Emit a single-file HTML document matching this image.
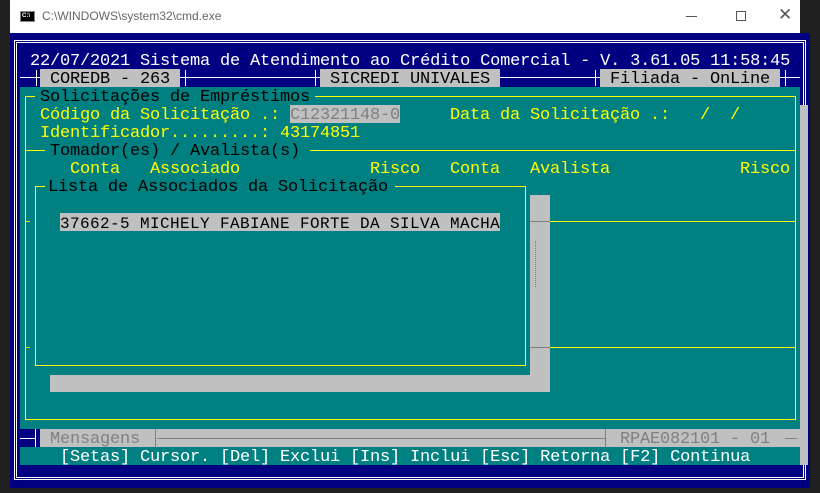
<!DOCTYPE html>
<html><head><meta charset="utf-8"><style>
*{margin:0;padding:0;box-sizing:border-box}
body{width:820px;height:493px;background:#202020;position:relative;overflow:hidden;font-family:"Liberation Mono",monospace}
.a{position:absolute}
.t{position:absolute;font-size:17px;letter-spacing:-0.2px;line-height:18px;height:18px;white-space:pre;padding-top:2px}
.y{color:#ffff00}.k{color:#000}.w{color:#fff}.g{color:#808080}
</style></head><body>
<!-- title bar -->
<div class="a" style="left:10px;top:0;width:790px;height:33px;background:#fff"></div>
<div class="a" style="left:20px;top:11px;width:15px;height:11px;background:#000;border:1px solid #888"></div>
<div class="a" style="left:22px;top:13px;font:bold 6px 'Liberation Sans';color:#fff">C:\</div>
<div class="a" style="left:42px;top:9px;font:12px 'Liberation Sans',sans-serif;color:#666">C:\WINDOWS\system32\cmd.exe</div>
<div class="a" style="left:686px;top:16px;width:11px;height:1px;background:#555"></div>
<div class="a" style="left:736px;top:11px;width:10px;height:10px;border:1px solid #555"></div>
<div class="a" style="left:778px;top:5px;font:17px 'Liberation Sans';color:#555">✕</div>
<!-- console -->
<div class="a" style="left:10px;top:33px;width:800px;height:455px;background:#000080"></div>
<div class="a" style="left:14px;top:40px;width:792px;height:440px;border:1px solid #fff"></div>
<div class="a" style="left:16px;top:42px;width:788px;height:436px;border:1px solid #fff"></div>
<div class="t w" style="left:30px;top:51px">22/07/2021 Sistema de Atendimento ao Crédito Comercial - V. 3.61.05 11:58:45</div>
<!-- row 2 -->
<div class="a" style="left:20px;top:77px;width:780px;height:1px;background:#fff"></div>
<div class="a" style="left:36px;top:70px;width:1px;height:16px;background:#fff"></div>
<div class="a" style="left:40px;top:69px;width:140px;height:18px;background:#c0c0c0"></div>
<div class="t k" style="left:50px;top:69px">COREDB - 263</div>
<div class="a" style="left:185px;top:70px;width:1px;height:16px;background:#fff"></div>
<div class="a" style="left:315px;top:70px;width:1px;height:16px;background:#fff"></div>
<div class="a" style="left:320px;top:69px;width:180px;height:18px;background:#c0c0c0"></div>
<div class="t k" style="left:330px;top:69px">SICREDI UNIVALES</div>
<div class="a" style="left:595px;top:70px;width:1px;height:16px;background:#fff"></div>
<div class="a" style="left:600px;top:69px;width:180px;height:18px;background:#c0c0c0"></div>
<div class="t k" style="left:610px;top:69px">Filiada - OnLine</div>
<div class="a" style="left:785px;top:70px;width:1px;height:16px;background:#fff"></div>
<!-- teal -->
<div class="a" style="left:20px;top:87px;width:780px;height:342px;background:#008080"></div>
<div class="a" style="left:800px;top:105px;width:8px;height:360px;background:#c0c0c0"></div>
<div class="a" style="left:25px;top:96px;width:771px;height:324px;border:1px solid #ffff00"></div>
<div class="a" style="left:35px;top:88px;width:280px;height:16px;background:#008080"></div>
<div class="t k" style="left:40px;top:87px">Solicitações de Empréstimos</div>
<div class="t y" style="left:40px;top:105px">Código da Solicitação .:</div>
<div class="a" style="left:290px;top:105px;width:110px;height:18px;background:#c0c0c0"></div>
<div class="t g" style="left:290px;top:105px">C12321148-0</div>
<div class="t y" style="left:450px;top:105px">Data da Solicitação .:   /  /</div>
<div class="t y" style="left:40px;top:123px">Identificador.........: 43174851</div>
<div class="a" style="left:25px;top:150px;width:771px;height:1px;background:#ffff00"></div>
<div class="a" style="left:45px;top:142px;width:265px;height:16px;background:#008080"></div>
<div class="t k" style="left:50px;top:141px">Tomador(es) / Avalista(s)</div>
<div class="t y" style="left:70px;top:159px">Conta</div>
<div class="t y" style="left:150px;top:159px">Associado</div>
<div class="t y" style="left:370px;top:159px">Risco</div>
<div class="t y" style="left:450px;top:159px">Conta</div>
<div class="t y" style="left:530px;top:159px">Avalista</div>
<div class="t y" style="left:740px;top:159px">Risco</div>
<!-- inner list -->
<div class="a" style="left:35px;top:186px;width:491px;height:180px;border:1px solid #ffff00"></div>
<div class="a" style="left:45px;top:178px;width:350px;height:16px;background:#008080"></div>
<div class="t k" style="left:48px;top:177px">Lista de Associados da Solicitação</div>
<div class="a" style="left:26px;top:221px;width:4px;height:1px;background:#ffff00"></div>
<div class="a" style="left:26px;top:347px;width:4px;height:1px;background:#ffff00"></div>
<div class="a" style="left:60px;top:213px;width:440px;height:18px;background:#c0c0c0"></div>
<div class="t k" style="left:60px;top:213px;font-size:16px;letter-spacing:0.4px">37662-5 MICHELY FABIANE FORTE DA SILVA MACHA</div>
<div class="a" style="left:530px;top:195px;width:20px;height:197px;background:#c0c0c0"></div>
<div class="a" style="left:50px;top:375px;width:500px;height:17px;background:#c0c0c0"></div>
<div class="a" style="left:530px;top:221px;width:20px;height:1px;background:#808080"></div>
<div class="a" style="left:530px;top:347px;width:20px;height:1px;background:#808080"></div>
<div class="a" style="left:550px;top:221px;width:245px;height:1px;background:#ffff00"></div>
<div class="a" style="left:550px;top:347px;width:245px;height:1px;background:#ffff00"></div>
<div class="a" style="left:535px;top:241px;width:1px;height:46px;border-left:1px dotted #808080"></div>
<!-- row 22 -->
<div class="a" style="left:20px;top:429px;width:20px;height:18px;background:#000080"></div>
<div class="a" style="left:20px;top:438px;width:15px;height:1px;background:#fff"></div>
<div class="a" style="left:35px;top:429px;width:1px;height:18px;background:#fff"></div>
<div class="a" style="left:40px;top:429px;width:768px;height:18px;background:#c0c0c0"></div>
<div class="t g" style="left:50px;top:429px">Mensagens</div>
<div class="a" style="left:155px;top:429px;width:1px;height:18px;background:#808080"></div>
<div class="a" style="left:157px;top:438px;width:448px;height:1px;background:#808080"></div>
<div class="a" style="left:605px;top:429px;width:1px;height:18px;background:#808080"></div>
<div class="t g" style="left:620px;top:429px">RPAE082101 - 01</div>
<div class="a" style="left:785px;top:438px;width:12px;height:1px;background:#808080"></div>
<!-- footer -->
<div class="a" style="left:20px;top:447px;width:780px;height:18px;background:#008080"></div>
<div class="t w" style="left:60px;top:447px">[Setas] Cursor. [Del] Exclui [Ins] Inclui [Esc] Retorna [F2] Continua</div>
</body></html>
